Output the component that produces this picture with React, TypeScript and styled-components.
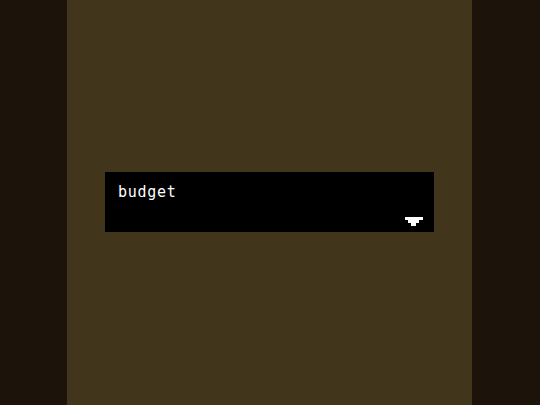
import React from 'react';
import styled, { createGlobalStyle } from 'styled-components';

const GlobalStyle = createGlobalStyle`
  html, body {
    margin: 0;
    padding: 0;
    background: #1c140b;
  }
  #root {
    height: 405px;
  }
`;

export default function App() {
  return (
    <>
      <GlobalStyle />
      <Screen>
        <Side $width={67} />
        <Stage>
          <DialogBox>
            <Line>budget</Line>
            <Footer>
              <MoreArrow />
            </Footer>
          </DialogBox>
        </Stage>
        <Side $width={68} />
      </Screen>
    </>
  );
}

const MoreArrow: React.FC = () => (
  <svg width="18" height="9" viewBox="0 0 18 9" shapeRendering="crispEdges">
    <rect x="0" y="0" width="18" height="3" fill="#fff" />
    <rect x="3" y="3" width="11" height="3" fill="#fff" />
    <rect x="6" y="6" width="5" height="3" fill="#fff" />
  </svg>
);

const Screen = styled.div`
  display: flex;
  width: 540px;
  height: 405px;
`;

const Side = styled.div<{ $width: number }>`
  width: ${(p) => p.$width}px;
  flex-shrink: 0;
  background: #1c140b;
`;

const Stage = styled.div`
  width: 405px;
  height: 405px;
  flex-shrink: 0;
  background: #41361c;
  display: flex;
  flex-direction: column;
  padding: 172px 38px 0 38px;
  box-sizing: border-box;
`;

const DialogBox = styled.div`
  width: 329px;
  height: 60px;
  background: #000;
  box-sizing: border-box;
  padding: 11px 11px 6px 13px;
  display: flex;
  flex-direction: column;
`;

const Line = styled.div`
  font-family: "DejaVu Sans Mono", monospace;
  font-size: 15px;
  line-height: 18px;
  color: #fff;
  letter-spacing: 0.7px;
  -webkit-font-smoothing: none;
`;

const Footer = styled.div`
  margin-top: auto;
  display: flex;
  justify-content: flex-end;
`;
